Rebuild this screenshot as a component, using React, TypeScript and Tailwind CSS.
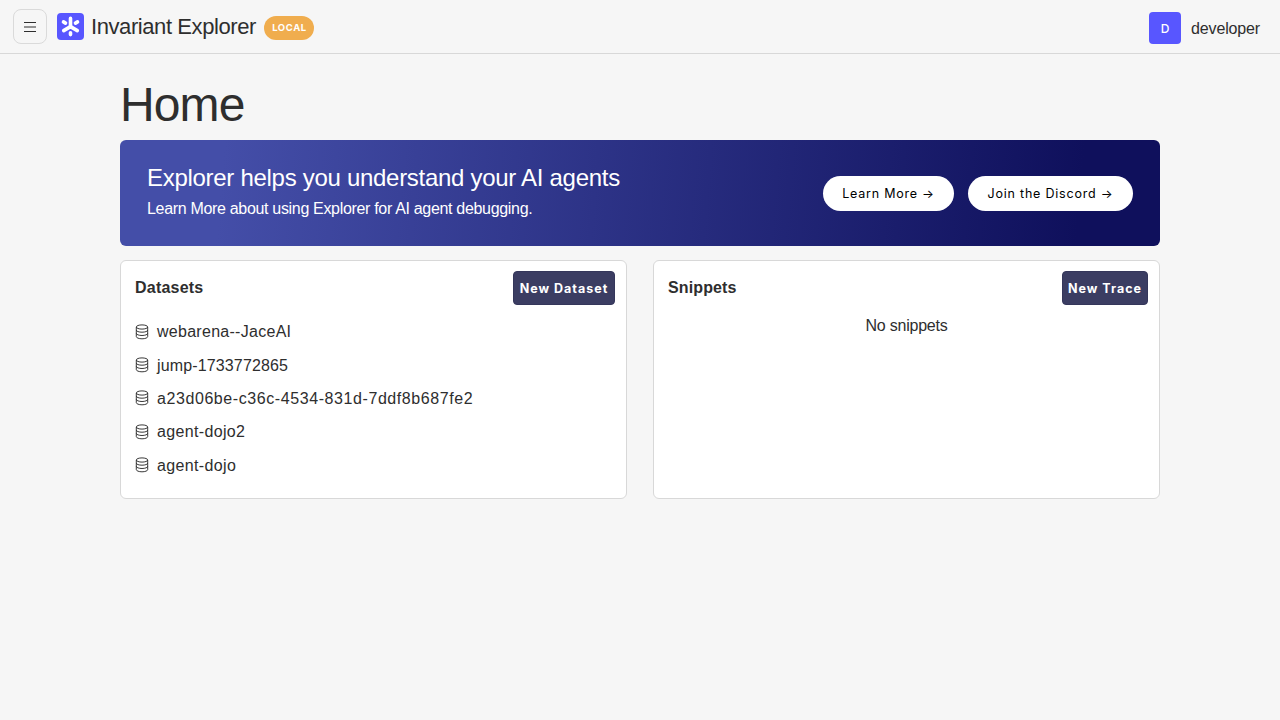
const datasets: { name: string; spacing: string }[] = [
  { name: "webarena--JaceAI", spacing: "tracking-[0.28px]" },
  { name: "jump-1733772865", spacing: "tracking-[0.14px]" },
  { name: "a23d06be-c36c-4534-831d-7ddf8b687fe2", spacing: "tracking-[0.58px]" },
  { name: "agent-dojo2", spacing: "tracking-[0.34px]" },
  { name: "agent-dojo", spacing: "tracking-[0.36px]" },
];

function Logo() {
  return (
    <svg className="ml-[10px] size-[27px] shrink-0" viewBox="0 0 27 27" aria-hidden="true">
      <rect width="27" height="27" rx="4" fill="#5856ff" />
      <g stroke="#fff" strokeWidth="3.6" strokeLinecap="round" fill="none">
        <path d="M13.5 5.4V13M13.5 19.8V21.6M6.5 8.9L8.5 10.1M20.5 8.9L18.5 10.1" />
        <path d="M13.5 13.6L6.7 17.6M13.5 13.6L20.3 17.6" />
      </g>
    </svg>
  );
}

function MenuIcon() {
  return (
    <svg className="size-4" viewBox="0 0 16 16" fill="none" stroke="currentColor" aria-hidden="true">
      <path d="M2 3.5H14M2 8H14M2 12.5H14" />
    </svg>
  );
}

function DatabaseIcon() {
  return (
    <svg className="h-4 w-[14px] shrink-0" viewBox="0 0 14 16" fill="none" stroke="currentColor" strokeWidth="0.95" aria-hidden="true">
      <ellipse cx="7" cy="3" rx="5.7" ry="2.1" />
      <path d="M1.3 3V12.6C1.3 13.8 3.8 14.8 7 14.8S12.7 13.8 12.7 12.6V3" />
      <path d="M1.3 6.1C1.3 7.3 3.8 8.2 7 8.2S12.7 7.3 12.7 6.1M1.3 9.3C1.3 10.5 3.8 11.5 7 11.5S12.7 10.5 12.7 9.3" />
    </svg>
  );
}

function Header() {
  return (
    <header className="flex h-[54px] shrink-0 items-center border-b border-[#d8d8d8] pl-[13px] pr-5">
      <button className="flex h-[35px] w-[34px] items-center justify-center rounded-lg border border-[#dadada]">
        <MenuIcon />
      </button>
      <Logo />
      <span className="ml-[7px] w-[165px] whitespace-nowrap text-[22px] leading-7 tracking-[-0.42px]">Invariant Explorer</span>
      <span className="ml-2 mt-[2px] flex h-6 w-[50px] items-center justify-center rounded-full bg-[#f0ad4e] pl-px pt-[2px] font-['Inter',sans-serif] text-[9.5px] font-bold tracking-[0.6px] text-white">
        LOCAL
      </span>
      <div className="ml-auto mt-[3px] flex items-center">
        <span className="flex size-8 items-center justify-center rounded bg-[#5856ff] pt-px font-['Inter',sans-serif] text-[12px] font-medium text-white">D</span>
        <span className="ml-[10px] whitespace-nowrap pt-[2px] text-base tracking-[-0.15px]">developer</span>
      </div>
    </header>
  );
}

function Banner() {
  return (
    <section className="mt-[11px] flex h-[106px] items-center justify-between rounded-md bg-[linear-gradient(95deg,#444ea8_10%,#0f105c_92%)] px-[27px] text-white">
      <div className="-mt-px">
        <h2 className="whitespace-nowrap text-2xl tracking-[-0.29px]">Explorer helps you understand your AI agents</h2>
        <p className="whitespace-nowrap text-base leading-[30px] tracking-[-0.32px]">Learn More about using Explorer for AI agent debugging.</p>
      </div>
      <div className="flex gap-[14px] font-['Inter',sans-serif] text-[12.5px] tracking-[0.78px] text-black">
        <button className="h-[35px] w-[131px] whitespace-nowrap rounded-full bg-white pt-[2px]">Learn More →</button>
        <button className="h-[35px] w-[165px] whitespace-nowrap rounded-full bg-white pt-[2px]">Join the Discord →</button>
      </div>
    </section>
  );
}

const panel = "h-[239px] rounded-md border border-[#d8d8d8] bg-white pl-[14px] pr-[11px] pt-[10px]";
const action =
  "flex h-[34px] items-center justify-center whitespace-nowrap rounded border border-[#34365a] bg-[#3b3d62] pt-[3px] font-['Inter',sans-serif] text-[12.5px] font-bold tracking-[1px] text-white";

export default function App() {
  return (
    <div className="flex min-h-screen flex-col bg-[#f6f6f6] font-['Liberation_Sans',Arial,sans-serif] text-[#2e2e2e]">
      <Header />
      <main className="mx-auto w-[1040px] pt-[27px]">
        <h1 className="text-5xl leading-[48px] tracking-[-0.9px]">Home</h1>
        <Banner />
        <div className="mt-[14px] grid grid-cols-2 gap-[26px]">
          <section className={panel}>
            <div className="flex items-center justify-between">
              <h3 className="text-base font-bold tracking-[0.22px]">Datasets</h3>
              <button className={`${action} w-[102px]`}>New Dataset</button>
            </div>
            <ul className="mt-[10px]">
              {datasets.map((d) => (
                <li key={d.name} className="flex h-[33.4px] items-center">
                  <DatabaseIcon />
                  <span className={`ml-2 whitespace-nowrap pt-px text-base ${d.spacing}`}>{d.name}</span>
                </li>
              ))}
            </ul>
          </section>
          <section className={panel}>
            <div className="flex items-center justify-between">
              <h3 className="text-base font-bold tracking-[0.12px]">Snippets</h3>
              <button className={`${action} w-[86px]`}>New Trace</button>
            </div>
            <p className="mt-[9px] pr-[3px] text-center text-base tracking-[-0.22px]">No snippets</p>
          </section>
        </div>
      </main>
    </div>
  );
}
